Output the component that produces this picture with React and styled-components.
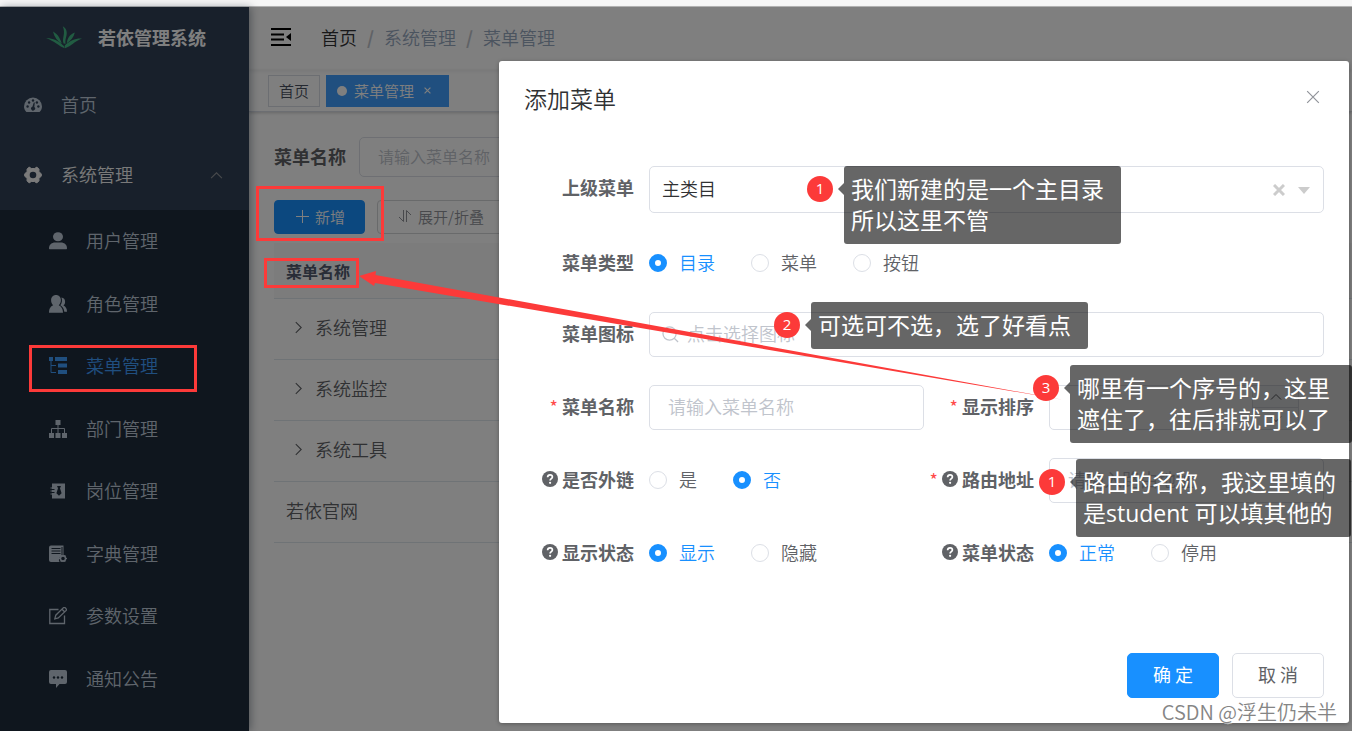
import React from "react";
import styled, { createGlobalStyle, css } from "styled-components";

const cjk = `"Noto Sans CJK SC", sans-serif`;
const red = "#fc3a39";

const GlobalStyle = createGlobalStyle`
  *, *::before, *::after { box-sizing: border-box; }
  body { margin: 0; font-family: ${cjk}; font-size: 18px; font-weight: 350; color: #606266; }
  button, input, select { font: inherit; color: inherit; margin: 0; }
  ul { list-style: none; margin: 0; padding: 0; }
  a { color: inherit; text-decoration: none; }
`;

/* ---------- page frame ---------- */

const Page = styled.div`
  position: relative;
  display: flex;
  flex-direction: column;
  min-height: 100vh;
  overflow: hidden;
`;
const WindowStrip = styled.div`
  height: 7px;
  background: #f6f6f6;
  border-bottom: 1px solid #b4b4b4;
`;
const Shell = styled.div`
  position: relative;
  flex: 1;
  display: grid;
  grid-template-columns: 249px minmax(0, 1fr);
  background: #fff;
`;

/* ---------- sidebar ---------- */

const Sidebar = styled.aside`
  position: relative;
  z-index: 1;
  display: flex;
  flex-direction: column;
  background: #304156;
  color: #bfcbd9;
  box-shadow: 2px 0 8px rgba(0, 21, 41, 0.35);
`;
const Brand = styled.a`
  display: flex;
  align-items: center;
  gap: 16px;
  height: 63px;
  padding: 0 0 4px 46px;
  color: #fff;
  font-weight: 700;
`;
const Nav = styled.nav`
  flex: 1;
  display: flex;
  flex-direction: column;
`;
const TopItem = styled.a`
  display: flex;
  align-items: center;
  gap: 19px;
  height: 70px;
  padding: 0 26px 0 24px;
  color: ${(p) => (p.$open ? "#f4f4f5" : "#bfcbd9")};
  & > span { flex: 1; padding-bottom: 2px; }
`;
const SubMenu = styled.div`
  flex: 1;
  background: #1f2d3d;
  padding-bottom: 21px;
`;
const SubList = styled.ul`
  display: grid;
  grid-template-rows: repeat(8, 1fr);
  height: 500px;
`;
const SubItem = styled.a`
  display: flex;
  align-items: center;
  gap: 19px;
  height: 100%;
  padding-left: 49px;
  color: ${(p) => (p.$active ? "#409eff" : "#bfcbd9")};
  & > span { padding-bottom: 2px; }
`;

/* ---------- main column ---------- */

const Main = styled.div`
  display: flex;
  flex-direction: column;
`;
const Navbar = styled.header`
  display: flex;
  align-items: center;
  gap: 28px;
  height: 63px;
  padding: 0 0 4px 22px;
  box-shadow: 0 1px 4px rgba(0, 21, 41, 0.08);
`;
const PlainButton = styled.button`
  display: flex;
  align-items: center;
  justify-content: center;
  padding: 0;
  border: 0;
  background: none;
`;
const Crumbs = styled.ol`
  display: flex;
  gap: 10px;
  list-style: none;
  margin: 0;
  padding: 0;
  color: #97a8be;
  li { display: flex; gap: 10px; }
  li:first-child { color: #303133; }
  li + li::before { content: "/"; color: #c0c4cc; font-weight: 700; }
`;
const Tags = styled.div`
  display: flex;
  align-items: center;
  gap: 6px;
  height: 42px;
  padding-left: 19px;
  border-bottom: 1px solid #d8dce5;
  box-shadow: 0 1px 3px rgba(0, 0, 0, 0.2);
`;
const Tag = styled.a`
  display: flex;
  align-items: center;
  gap: 7px;
  height: 32px;
  padding: 0 10px;
  border: 1px solid #d8dce5;
  font-size: 15px;
  color: #495060;
  svg { margin-left: 3px; }
  ${(p) => p.$active && css`
    padding: 0 17px 0 10px;
    background: #409eff;
    border-color: #409eff;
    color: #fff;
    &::before { content: ""; width: 10px; height: 10px; border-radius: 50%; background: #fff; }
  `}
`;
const Content = styled.main`
  padding: 25px 0 0 25px;
`;
const Query = styled.form`
  display: flex;
  align-items: center;
  gap: 13px;
  margin-bottom: 23px;
  label { font-weight: 700; color: #606266; padding-bottom: 2px; }
`;
const QueryInput = styled.input`
  width: 300px;
  height: 40px;
  padding: 0 18px 2px;
  border: 1px solid #dcdfe6;
  border-radius: 5px;
  font-size: 16px;
  &::placeholder { color: #c0c4cc; opacity: 1; }
`;
const Toolbar = styled.div`
  display: flex;
  gap: 12px;
  margin-bottom: 9px;
`;
const ToolButton = styled.button`
  display: flex;
  align-items: center;
  gap: 5px;
  height: 34px;
  padding: 0 19px 2px;
  border: 1px solid ${(p) => (p.$primary ? "#1890ff" : "#d3d4d6")};
  border-radius: 4px;
  background: ${(p) => (p.$primary ? "#1890ff" : "#fff")};
  color: ${(p) => (p.$primary ? "#fff" : "#909399")};
  font-size: 15px;
`;
const Table = styled.table`
  width: 100%;
  border-collapse: separate;
  border-spacing: 0;
  text-align: left;
  th, td { padding: 0 12px; border-bottom: 1px solid #dfe6ec; }
  th { height: 56px; background: #f8f8f9; color: #515a6e; font-size: 16px; font-weight: 700; }
  td { height: 61px; padding-bottom: 4px; }
`;
const Cell = styled.div`
  display: flex;
  align-items: center;
  gap: 10px;
  padding-left: ${(p) => (p.$branch ? "6px" : "0")};
`;

/* ---------- dialog ---------- */

const Overlay = styled.div`
  position: absolute;
  inset: 0;
  z-index: 2;
  display: flex;
  align-items: flex-start;
  padding: 54px 3px 8px 499px;
  background: rgba(0, 0, 0, 0.5);
`;
const Dialog = styled.section`
  flex: 1;
  min-width: 0;
  padding: 23px 25px 25px;
  border-radius: 3px;
  background: #fff;
  box-shadow: 0 1px 4px rgba(0, 0, 0, 0.3);
`;
const DialogHead = styled.div`
  display: flex;
  align-items: flex-start;
  justify-content: space-between;
  padding-right: 4px;
  margin-bottom: 54px;
  h2 { margin: 0; font-size: 23px; font-weight: 350; line-height: 28px; color: #303133; }
  button { height: 26px; }
`;
const Form = styled.form`
  display: grid;
  grid-template-columns: 1fr 1fr;
  row-gap: 28px;
`;
const FormItem = styled.div`
  display: flex;
  align-items: flex-start;
  grid-column: ${(p) => (p.$wide ? "1 / -1" : "auto")};
`;
const Label = styled.label`
  display: flex;
  align-items: center;
  justify-content: flex-end;
  gap: 4px;
  flex: none;
  width: 125px;
  height: 43px;
  padding: 0 15px 2px 0;
  font-weight: 700;
  white-space: nowrap;
`;
const Star = styled.span`
  color: #ff4949;
  font-weight: 400;
`;
const Control = styled.div`
  position: relative;
  flex: 1;
  min-width: 0;
  display: flex;
  padding-right: ${(p) => (p.$inset ? "25px" : "0")};
`;
const Field = styled.input`
  width: 100%;
  height: 45px;
  padding: 0 18px 3px ${(p) => (p.$icon ? "37px" : "18px")};
  border: 1px solid #dcdfe6;
  border-radius: 5px;
  background: #fff;
  &::placeholder { color: #c0c4cc; opacity: 1; }
`;
const Select = styled.select`
  appearance: none;
  width: 100%;
  height: 47px;
  padding: 0 60px 4px 12px;
  border: 1px solid #dcdfe6;
  border-radius: 5px;
  background: #fff;
  color: #303133;
`;
const SelectTools = styled.span`
  position: absolute;
  right: 14px;
  top: 0;
  height: 47px;
  display: flex;
  align-items: center;
  gap: 13px;
  pointer-events: none;
`;
const FieldIcon = styled.span`
  position: absolute;
  left: 13px;
  top: 0;
  height: 45px;
  display: flex;
  align-items: center;
`;
const Stepper = styled.div`
  position: absolute;
  right: 26px;
  top: 1px;
  display: grid;
  grid-template-rows: 21px 22px;
  width: 46px;
  border-left: 1px solid #dcdfe6;
  background: #f5f7fa;
  button + button { border-top: 1px solid #dcdfe6; }
`;
const Radios = styled.div`
  display: flex;
  align-items: center;
  gap: 36px;
  height: 43px;
`;
const RadioLabel = styled.label`
  display: flex;
  align-items: center;
  gap: 12px;
  input {
    appearance: none;
    width: 18px;
    height: 18px;
    border: 1px solid #dcdfe6;
    border-radius: 50%;
    background: #fff;
  }
  span { padding-bottom: 2px; }
  input:checked { border: 6px solid #1890ff; }
  input:checked + span { color: #1890ff; }
`;
const DialogFoot = styled.div`
  display: flex;
  justify-content: flex-end;
  gap: 13px;
  margin-top: 79px;
`;
const FootButton = styled.button`
  width: 92px;
  height: 45px;
  padding: 0 0 4px;
  border: 1px solid ${(p) => (p.$primary ? "#1890ff" : "#dcdfe6")};
  border-radius: 5px;
  background: ${(p) => (p.$primary ? "#1890ff" : "#fff")};
  color: ${(p) => (p.$primary ? "#fff" : "#606266")};
  font-weight: 400;
`;

/* ---------- tutorial marks over the page ---------- */

const Marks = styled.div`
  position: absolute;
  inset: 0;
  z-index: 3;
  pointer-events: none;
`;
const Frame = styled.div`
  position: absolute;
  left: ${(p) => p.$x}px;
  top: ${(p) => p.$y}px;
  width: ${(p) => p.$w}px;
  height: ${(p) => p.$h}px;
  border: 3px solid ${red};
`;
const Arrow = styled.svg`
  position: absolute;
  left: 359px;
  top: 270px;
`;
const Note = styled.div`
  position: absolute;
  left: ${(p) => p.$x}px;
  top: ${(p) => p.$y}px;
  display: flex;
  align-items: flex-start;
  gap: 11px;
`;
const Badge = styled.span`
  flex: none;
  width: 26px;
  height: 26px;
  margin-top: 10px;
  border-radius: 50%;
  background: ${red};
  color: #fff;
  font: 400 15px/24px "Open Sans", sans-serif;
  text-align: center;
`;
const Bubble = styled.p`
  position: relative;
  margin: 0;
  padding: 8px 7px;
  width: ${(p) => p.$w}px;
  border-radius: 3px;
  background: rgba(0, 0, 0, 0.6);
  color: #fff;
  font: 400 23px/31px "Open Sans", ${cjk};
  white-space: nowrap;
  &::before {
    content: "";
    position: absolute;
    left: -6px;
    top: 17px;
    border: solid transparent;
    border-width: 6px 6px 6px 0;
    border-right-color: rgba(0, 0, 0, 0.6);
  }
`;
const Watermark = styled.div`
  position: absolute;
  right: 15px;
  bottom: 4px;
  font-size: 20px;
  line-height: 30px;
  font-weight: 350;
  color: #858585;
  text-shadow: 1px 1px 0 rgba(255, 255, 255, 0.6);
`;

/* ---------- icons ---------- */

const Svg = ({ size = 18, children, ...rest }) => (
  <svg width={size} height={size} viewBox="0 0 18 18" fill="currentColor" aria-hidden="true" {...rest}>
    {children}
  </svg>
);

const LogoMark = () => (
  <svg width="36" height="24" viewBox="0 0 36 24" fill="#43b984" aria-hidden="true">
    <path d="M17.6 18.5C15.6 13 20 9 16.8 1.2 21.8 4 21 9.2 20 12.5 19.3 15 19.2 17 19.6 18.8Z" />
    <path d="M15.8 18.5C14 13.5 12.3 9.5 7 6.4 8.4 12.2 11.3 16 15.8 18.5Z" />
    <path d="M20.8 18.2C21.4 12.8 24 9.4 28.8 7.4 27.8 12 25 15.5 20.8 18.2Z" />
    <path d="M0 13.2C5.6 12.9 12 14.6 18.4 21.6L18.6 23.3C12.6 21 8.8 15.9 0 13.2Z" />
    <path d="M36 13.6C29.5 13.2 24 15.4 18.8 20.6L19 23.2C25.6 21.6 28 16.4 36 13.6Z" />
  </svg>
);

const icons = {
  dashboard: (
    <Svg>
      <path d="M2.4 16C.9 14.6 0 12.7 0 10.5a9 9 0 0 1 18 0c0 2.2-.9 4.1-2.4 5.5Z" />
      <g fill="#304156">
        <circle cx="3.6" cy="10.5" r="1.2" />
        <circle cx="5.1" cy="6.5" r="1.2" />
        <circle cx="9" cy="4.5" r="1.2" />
        <circle cx="12.9" cy="6.5" r="1.2" />
        <circle cx="14.4" cy="10.5" r="1.2" />
        <path d="M9.8 6.5h1l-.5 4.5a2 2 0 1 1-1.9-.3Z" />
      </g>
    </Svg>
  ),
  system: (
    <Svg>
      <path
        d="M4.8 1.3H6L7.2 2.5H10.8L12 1.3H13.2L15 3.2 14.9 5.7 17.3 7.8V10.2L14.9 12.3 15 14.8 13.2 16.7H12L10.8 15.500H7.2L6 16.7H4.8L3 14.8 3.1 12.3.7 10.2V7.8L3.1 5.7 3 3.2Z"
        stroke="currentColor"
        strokeLinejoin="round"
      />
      <circle cx="9" cy="9" r="3.3" fill="#304156" />
    </Svg>
  ),
  user: (
    <Svg>
      <ellipse cx="9" cy="4.7" rx="5" ry="4.5" />
      <path d="M0 16.2c0-3.6 3-5.7 6-5.7h6c3 0 6 2.1 6 5.7 0 .7-.4 1-1 1H1c-.6 0-1-.3-1-1Z" />
    </Svg>
  ),
  peoples: (
    <Svg>
      <path d="M7 0c2.9 0 4.9 2.2 4.9 5.2 0 2-.8 3.9-2.2 5 2.4 1.2 4.3 3.3 4.3 7.6H0c0-4.3 1.6-6.4 4.2-7.6C2.8 9.1 2.1 7.2 2.1 5.2 2.1 2.2 4.1 0 7 0Z" />
      <path d="M12.4 2.5c2.3.2 3.7 1.9 3.7 4.2 0 1.7-.6 3-1.6 3.8 2.3 1.3 3.5 3 3.5 6.3h-2.7c-.2-3-1.6-5.2-4-6.6 1.800-2 2.200-5 1.100-7.700Z" />
    </Svg>
  ),
  treeTable: (
    <Svg>
      <path d="M0 0h4v4H0ZM6 0h12v4H6ZM9 6.5h9v4H9ZM9 13h9v4H9Z" />
      <path d="M2 4v11.5h5M2 8.5h5" fill="none" stroke="currentColor" />
    </Svg>
  ),
  tree: (
    <Svg>
      <path d="M6.5 0h5v5h-5ZM0 13h5v5H0ZM6.5 13h5v5h-5ZM13 13h5v5h-5Z" />
      <path d="M9 5v8M2.5 13V8.5h13V13" fill="none" stroke="currentColor" />
    </Svg>
  ),
  post: (
    <Svg>
      <path d="M3 1.5h13v15H3Z" />
      <path d="M1.5 6h4M1.5 9h4M1.5 12h4" stroke="currentColor" strokeWidth="1.2" />
      <path d="M8 4h4l-1 2.2 1.6 5-2.6 2.6-2.6-2.6 1.6-5Z" fill="#1f2d3d" />
      <path d="M3 7.5h2.5M3 10.5h2.5" stroke="#1f2d3d" />
    </Svg>
  ),
  dict: (
    <Svg>
      <path d="M2 .5h12.5V11a4 4 0 0 0-4 6H2a2 2 0 0 1-2-2V2.5a2 2 0 0 1 2-2Z" />
      <path d="M2.5 3.5h9M2.5 6h9M2.5 8.5h9M13 2v8.5" stroke="#1f2d3d" fill="none" />
      <circle cx="14" cy="13.5" r="2.6" fill="none" stroke="currentColor" strokeWidth="1.6" />
      <path d="M9.8 13.5h1.5M16.7 13.5h1.3M11.8 10l.7 1M16.2 10l-.7 1M11.8 17l.7-1M16.2 17l-.7-1" stroke="currentColor" />
    </Svg>
  ),
  edit: (
    <Svg fill="none" stroke="currentColor" strokeWidth="1.3">
      <path d="M9.5 2.5H.8v14h14.7V8.5" />
      <path d="M5.8 11.8l1-3.6L14.2.9c.8-.7 1.6-.5 2.2.1l.6.6c.6.6.6 1.4 0 2L9.3 11Z M13 2.2l2.8 2.8" />
    </Svg>
  ),
  message: (
    <Svg>
      <path d="M2 0h14a2 2 0 0 1 2 2v10a2 2 0 0 1-2 2h-5.5L7 18v-4H2a2 2 0 0 1-2-2V2a2 2 0 0 1 2-2Z" />
      <g fill="#1f2d3d">
        <circle cx="5" cy="7.5" r="1.2" />
        <circle cx="9" cy="7.5" r="1.2" />
        <circle cx="13" cy="7.5" r="1.2" />
      </g>
    </Svg>
  ),
};

const Chevron = ({ d, size = 12, color = "currentColor" }) => (
  <svg width={size} height={size} viewBox="0 0 12 12" fill="none" stroke={color} aria-hidden="true">
    <path d={d} />
  </svg>
);
const UP = "M1 8.5 6 3.5 11 8.5";
const DOWN = "M1 3.5 6 8.5 11 3.5";
const RIGHT = "M3.5 1 8.5 6 3.5 11";

const Cross = ({ size, width = 1, color }) => (
  <svg width={size} height={size} viewBox="0 0 12 12" fill="none" stroke={color || "currentColor"} strokeWidth={width} aria-hidden="true">
    <path d="M1 1 11 11M11 1 1 11" />
  </svg>
);

const Help = () => (
  <svg width="16" height="16" viewBox="0 0 16 16" aria-hidden="true">
    <circle cx="8" cy="8" r="8" fill="#606266" />
    <path d="M5.6 6.2C5.7 4.7 6.7 3.9 8 3.9s2.4.8 2.4 2.1c0 1.6-2.3 1.7-2.3 3.5" fill="none" stroke="#fff" strokeWidth="1.7" />
    <circle cx="8.1" cy="11.8" r="1.1" fill="#fff" />
  </svg>
);

/* ---------- content ---------- */

const subItems = [
  ["user", "用户管理"],
  ["peoples", "角色管理"],
  ["treeTable", "菜单管理"],
  ["tree", "部门管理"],
  ["post", "岗位管理"],
  ["dict", "字典管理"],
  ["edit", "参数设置"],
  ["message", "通知公告"],
];

const rows = [
  ["系统管理", true],
  ["系统监控", true],
  ["系统工具", true],
  ["若依官网", false],
];

const notes = [
  { x: 807, y: 166, w: 277, n: 1, lines: ["我们新建的是一个主目录", "所以这里不管"] },
  { x: 774, y: 302, w: 277, n: 2, lines: ["可选可不选，选了好看点"] },
  { x: 1033, y: 365, w: 282, n: 3, lines: ["哪里有一个序号的，这里", "遮住了，往后排就可以了"] },
  { x: 1039, y: 459, w: 275, n: 1, lines: ["路由的名称，我这里填的", "是student 可以填其他的"] },
];

function RadioRow({ label, name, options, value, help, wide }) {
  return (
    <FormItem $wide={wide} role="radiogroup" aria-labelledby={`${name}-label`}>
      <Label as="div" id={`${name}-label`}>
        {help && <Help />}
        {label}
      </Label>
      <Radios>
        {options.map((o) => (
          <RadioLabel key={o}>
            <input type="radio" name={name} value={o} defaultChecked={o === value} />
            <span>{o}</span>
          </RadioLabel>
        ))}
      </Radios>
    </FormItem>
  );
}

function MenuDialog() {
  return (
    <Dialog role="dialog" aria-labelledby="dialog-title">
      <DialogHead>
        <h2 id="dialog-title">添加菜单</h2>
        <PlainButton type="button" aria-label="关闭">
          <Cross size={14} color="#909399" />
        </PlainButton>
      </DialogHead>
      <Form id="menu-form">
        <FormItem $wide>
          <Label htmlFor="parent">上级菜单</Label>
          <Control>
            <Select id="parent" defaultValue="0">
              <option value="0">主类目</option>
            </Select>
            <SelectTools>
              <Cross size={12} width={3} color="#ccc" />
              <svg width="12" height="8" viewBox="0 0 12 8" fill="#ccc" aria-hidden="true">
                <path d="M0 1h12L6 8Z" />
              </svg>
            </SelectTools>
          </Control>
        </FormItem>
        <RadioRow wide label="菜单类型" name="type" options={["目录", "菜单", "按钮"]} value="目录" />
        <FormItem $wide>
          <Label htmlFor="icon">菜单图标</Label>
          <Control>
            <Field id="icon" $icon placeholder="点击选择图标" />
            <FieldIcon>
              <Svg size={17} fill="none" stroke="#c0c4cc" strokeWidth="1.3">
                <circle cx="8" cy="8" r="7" />
                <path d="M13 13l4 4" />
              </Svg>
            </FieldIcon>
          </Control>
        </FormItem>
        <FormItem>
          <Label htmlFor="name"><Star>*</Star>菜单名称</Label>
          <Control>
            <Field id="name" placeholder="请输入菜单名称" />
          </Control>
        </FormItem>
        <FormItem>
          <Label htmlFor="order"><Star>*</Star>显示排序</Label>
          <Control $inset>
            <Field id="order" inputMode="numeric" />
            <Stepper>
              <PlainButton type="button" aria-label="增加"><Chevron d={UP} color="#606266" /></PlainButton>
              <PlainButton type="button" aria-label="减少"><Chevron d={DOWN} color="#606266" /></PlainButton>
            </Stepper>
          </Control>
        </FormItem>
        <RadioRow label="是否外链" name="frame" help options={["是", "否"]} value="否" />
        <FormItem>
          <Label htmlFor="path"><Star>*</Star><Help />路由地址</Label>
          <Control>
            <Field id="path" placeholder="请输入路由地址" />
          </Control>
        </FormItem>
        <RadioRow label="显示状态" name="visible" help options={["显示", "隐藏"]} value="显示" />
        <RadioRow label="菜单状态" name="status" help options={["正常", "停用"]} value="正常" />
      </Form>
      <DialogFoot>
        <FootButton type="submit" form="menu-form" $primary>确 定</FootButton>
        <FootButton type="button">取 消</FootButton>
      </DialogFoot>
    </Dialog>
  );
}

export default function App() {
  return (
    <Page>
      <GlobalStyle />
      <WindowStrip />
      <Shell>
        <Sidebar>
          <Brand href="#"><LogoMark />若依管理系统</Brand>
          <Nav>
            <TopItem href="#">{icons.dashboard}<span>首页</span></TopItem>
            <TopItem href="#" $open>
              {icons.system}
              <span>系统管理</span>
              <Chevron d={UP} size={13} color="#909399" />
            </TopItem>
            <SubMenu>
              <SubList>
                {subItems.map(([icon, text]) => (
                  <li key={text}>
                    <SubItem href="#" $active={icon === "treeTable"}>{icons[icon]}<span>{text}</span></SubItem>
                  </li>
                ))}
              </SubList>
            </SubMenu>
          </Nav>
        </Sidebar>
        <Main>
          <Navbar>
            <PlainButton type="button" aria-label="折叠菜单">
              <svg width="22" height="18" viewBox="0 0 22 18" fill="none" stroke="#000" strokeWidth="2" aria-hidden="true">
                <path d="M0 1h20M0 6.5h13M0 11.5h13M0 17h20" />
                <path d="M20 5v8l-5-4Z" fill="#000" stroke="none" />
              </svg>
            </PlainButton>
            <Crumbs>
              <li><a href="#">首页</a></li>
              <li>系统管理</li>
              <li>菜单管理</li>
            </Crumbs>
          </Navbar>
          <Tags>
            <Tag href="#">首页</Tag>
            <Tag href="#" $active>菜单管理<Cross size={7} width={2} /></Tag>
          </Tags>
          <Content>
            <Query>
              <label htmlFor="query">菜单名称</label>
              <QueryInput id="query" placeholder="请输入菜单名称" />
            </Query>
            <Toolbar>
              <ToolButton type="button" $primary>
                <svg width="16" height="16" viewBox="0 0 16 16" stroke="currentColor" aria-hidden="true">
                  <path d="M2 8.5h13M8.5 2v13" />
                </svg>
                新增
              </ToolButton>
              <ToolButton type="button">
                <svg width="16" height="16" viewBox="0 0 16 16" fill="none" stroke="currentColor" aria-hidden="true">
                  <path d="M6.5 2v11.5L2 9M9.5 14V2.5L14 7" />
                </svg>
                展开/折叠
              </ToolButton>
            </Toolbar>
            <Table>
              <thead><tr><th>菜单名称</th></tr></thead>
              <tbody>
                {rows.map(([text, branch]) => (
                  <tr key={text}>
                    <td>
                      <Cell $branch={branch}>
                        {branch && <Chevron d={RIGHT} size={13} />}
                        {text}
                      </Cell>
                    </td>
                  </tr>
                ))}
              </tbody>
            </Table>
          </Content>
        </Main>
        <Overlay><MenuDialog /></Overlay>
      </Shell>
      <Marks>
        <Frame $x={29} $y={345} $w={168} $h={47} />
        <Frame $x={256} $y={186} $w={128} $h={55} />
        <Frame $x={264} $y={258} $w={95} $h={30} />
        <Arrow width="706" height="131" viewBox="359 270 706 131" fill={red} aria-hidden="true">
          <path d="M359 276 376 271 375.5 275 1064 400 375 283 374 286Z" />
        </Arrow>
        {notes.map((note) => (
          <Note key={note.y} $x={note.x} $y={note.y}>
            <Badge>{note.n}</Badge>
            <Bubble $w={note.w}>
              {note.lines.map((line, i) => (
                <React.Fragment key={line}>
                  {i > 0 && <br />}
                  {line}
                </React.Fragment>
              ))}
            </Bubble>
          </Note>
        ))}
        <Watermark>CSDN @浮生仍未半</Watermark>
      </Marks>
    </Page>
  );
}
